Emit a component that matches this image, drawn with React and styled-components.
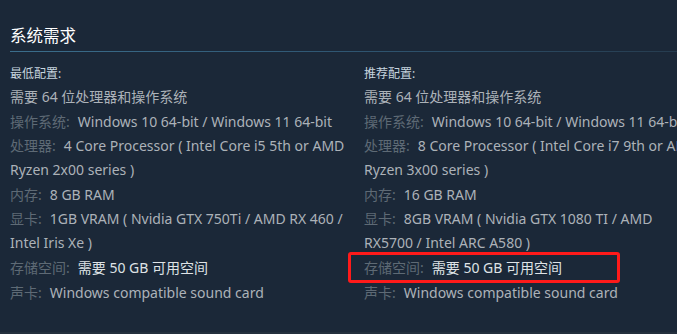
import React from 'react';
import styled, { createGlobalStyle } from 'styled-components';

const GlobalStyle = createGlobalStyle`
  html, body {
    margin: 0;
    padding: 0;
    background: #1b2838;
    overflow: hidden;
  }
  body {
    font-family: "Noto Sans", "Noto Sans CJK SC", Arial, sans-serif;
  }
`;

const minimum = [
  { text: '需要 64 位处理器和操作系统' },
  { label: '操作系统:', text: 'Windows 10 64-bit / Windows 11 64-bit' },
  { label: '处理器:', text: '4 Core Processor ( Intel Core i5 5th or AMD Ryzen 2x00 series )' },
  { label: '内存:', text: '8 GB RAM' },
  { label: '显卡:', text: '1GB VRAM ( Nvidia GTX 750Ti / AMD RX 460 / Intel Iris Xe )' },
  { label: '存储空间:', text: '需要 50 GB 可用空间', bright: true },
  { label: '声卡:', text: 'Windows compatible sound card' },
];

const recommended = [
  { text: '需要 64 位处理器和操作系统' },
  { label: '操作系统:', text: 'Windows 10 64-bit / Windows 11 64-bit' },
  { label: '处理器:', text: '8 Core Processor ( Intel Core i7 9th or AMD Ryzen 3x00 series )' },
  { label: '内存:', text: '16 GB RAM' },
  { label: '显卡:', text: '8GB VRAM ( Nvidia GTX 1080 TI / AMD RX5700 / Intel ARC A580 )' },
  { label: '存储空间:', text: '需要 50 GB 可用空间', bright: true, marked: true },
  { label: '声卡:', text: 'Windows compatible sound card' },
];

function renderColumn(title, rows) {
  return (
    <Column>
      <ColumnTitle>{title}</ColumnTitle>
      <List>
        {rows.map((row, i) => (
          <Item key={i} $marked={row.marked}>
            {row.label && <Label>{row.label}</Label>}
            <Value $bright={row.bright}>{row.text}</Value>
          </Item>
        ))}
      </List>
    </Column>
  );
}

export default function App() {
  return (
    <Page>
      <GlobalStyle />
      <Heading>系统需求</Heading>
      <Columns>
        {renderColumn('最低配置:', minimum)}
        {renderColumn('推荐配置:', recommended)}
      </Columns>
      <BottomStrip />
    </Page>
  );
}

const Page = styled.div`
  width: 677px;
  height: 334px;
  position: relative;
  overflow: hidden;
  padding: 24px 0 0 10px;
  box-sizing: border-box;
`;

const Heading = styled.h2`
  margin: 0;
  padding-bottom: 5px;
  font-size: 16.5px;
  font-weight: normal;
  line-height: 22px;
  color: #ffffff;
  font-family: "Noto Sans CJK SC", sans-serif;
  border-bottom: 1px solid transparent;
  border-image: linear-gradient(to right, #3b6e8c 0%, #2f5672 50%, #263c4f 100%) 1;
`;

const Columns = styled.div`
  display: grid;
  grid-template-columns: 354px 354px;
  margin-top: 13px;
`;

const Column = styled.div`
  padding-right: 14px;
`;

const ColumnTitle = styled.div`
  font-size: 12px;
  line-height: 18px;
  color: #c6d4df;
  margin-bottom: 2px;
`;

const List = styled.ul`
  list-style: none;
  margin: 0;
  padding: 0;
`;

const Item = styled.li`
  font-size: 14px;
  line-height: 24px;
  margin-bottom: 0.6px;
  position: relative;
  color: #acb2b8;

  ${(p) =>
    p.$marked &&
    `
    &::before {
      content: '';
      position: absolute;
      left: -16px;
      top: -4px;
      width: 272px;
      height: 31px;
      border: 3px solid #ff1a1a;
      border-radius: 3px;
      box-sizing: border-box;
    }
  `}
`;

const Label = styled.span`
  color: #5e6a75;
  margin-right: 8px;
`;

const Value = styled.span`
  color: ${(p) => (p.$bright ? '#dfe3e6' : '#acb2b8')};
`;

const BottomStrip = styled.div`
  position: absolute;
  left: 0;
  right: 0;
  bottom: 0;
  height: 2px;
  background: #24303d;
`;
